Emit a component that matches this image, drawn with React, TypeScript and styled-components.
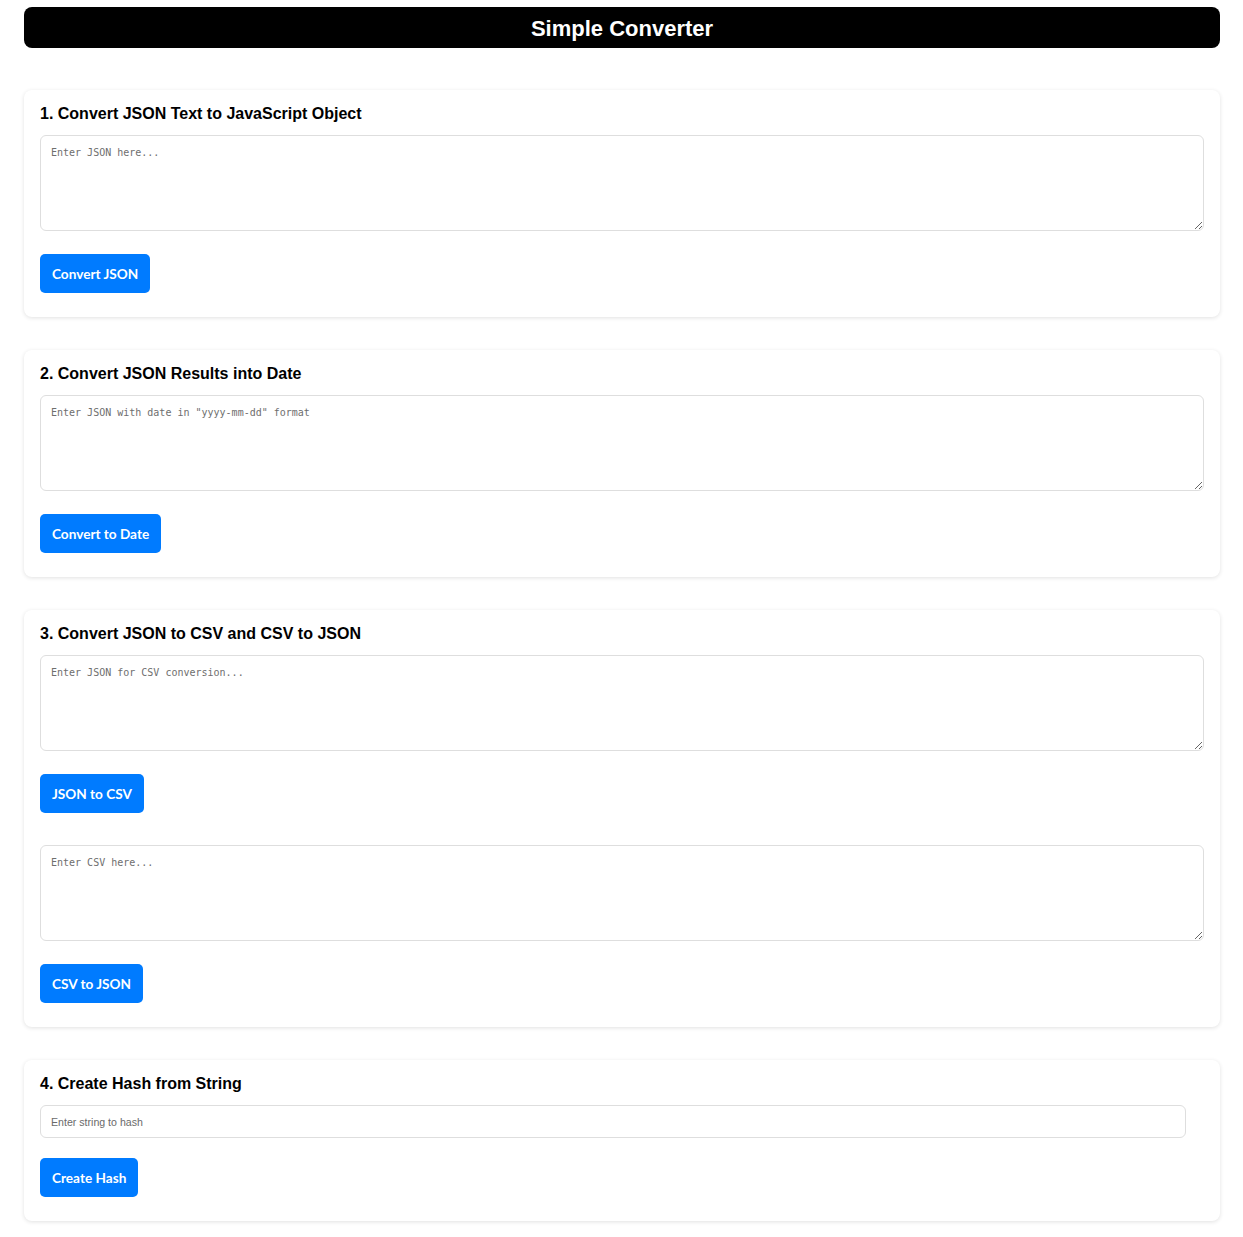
import React, { useState } from "react"
import styled, { createGlobalStyle } from "styled-components"

const GlobalStyle = createGlobalStyle`
  html, body {
    margin: 0;
    padding: 0;
    background: #ffffff;
    font-family: "Liberation Sans", Arial, sans-serif;
  }
  * {
    box-sizing: border-box;
  }
`

const sections = [
  {
    title: "1. Convert JSON Text to JavaScript Object",
    blocks: [{ placeholder: "Enter JSON here...", action: "Convert JSON" }],
  },
  {
    title: "2. Convert JSON Results into Date",
    blocks: [
      {
        placeholder: 'Enter JSON with date in "yyyy-mm-dd" format',
        action: "Convert to Date",
      },
    ],
  },
  {
    title: "3. Convert JSON to CSV and CSV to JSON",
    blocks: [
      { placeholder: "Enter JSON for CSV conversion...", action: "JSON to CSV" },
      { placeholder: "Enter CSV here...", action: "CSV to JSON" },
    ],
  },
]

const App = () => {
  const [hashInput, setHashInput] = useState("")

  return (
    <Page>
      <GlobalStyle />
      <Header>
        <Title>Simple Converter</Title>
      </Header>
      <SectionList>
        {sections.map(section => (
          <Card key={section.title}>
            <CardTitle>{section.title}</CardTitle>
            <BlockList>
              {section.blocks.map(block => (
                <Block key={block.action}>
                  <TextArea placeholder={block.placeholder} />
                  <Button type="button">{block.action}</Button>
                </Block>
              ))}
            </BlockList>
          </Card>
        ))}
        <Card>
          <CardTitle>4. Create Hash from String</CardTitle>
          <Block>
            <TextInput
              type="text"
              placeholder="Enter string to hash"
              value={hashInput}
              onChange={e => setHashInput(e.target.value)}
            />
            <Button type="button">Create Hash</Button>
          </Block>
        </Card>
      </SectionList>
    </Page>
  )
}

export default App

const Page = styled.div`
  padding: 7px 23px 10px 24px;
`

const Header = styled.header`
  height: 41px;
  padding-top: 2px;
  background-color: #000000;
  border-radius: 8px;
  display: flex;
  align-items: center;
  justify-content: center;
`

const Title = styled.h1`
  margin: 0;
  color: #ffffff;
  font-family: "Liberation Sans", Arial, sans-serif;
  font-size: 22px;
  font-weight: 700;
`

const SectionList = styled.main`
  display: flex;
  flex-direction: column;
  gap: 33px;
  margin-top: 42px;
`

const Card = styled.section`
  background-color: #ffffff;
  border-radius: 8px;
  padding: 15px 16px 24px;
  box-shadow: 0 1px 4px rgba(0, 0, 0, 0.12);
`

const CardTitle = styled.h2`
  margin: 0 0 12px;
  font-family: "Liberation Sans", Arial, sans-serif;
  font-size: 16px;
  font-weight: 700;
  line-height: 18px;
  color: #000000;
`

const BlockList = styled.div`
  display: flex;
  flex-direction: column;
  gap: 32px;
`

const Block = styled.div`
  display: flex;
  flex-direction: column;
  align-items: flex-start;
`

const TextArea = styled.textarea`
  display: block;
  width: 100%;
  height: 96px;
  margin: 0 0 23px;
  padding: 11px 10px 10px;
  border: 1px solid #dedede;
  border-radius: 6px;
  font-family: "DejaVu Sans Mono", "Liberation Mono", monospace;
  font-size: 10px;
  color: #333333;
  outline: none;

  &::placeholder {
    color: #6e6e6e;
  }
`

const TextInput = styled.input`
  display: block;
  width: 1146px;
  height: 33px;
  margin: 0 0 20px;
  padding: 0 10px;
  border: 1px solid #dedede;
  border-radius: 6px;
  font-family: "Liberation Sans", Arial, sans-serif;
  font-size: 10.6px;
  color: #333333;
  outline: none;

  &::placeholder {
    color: #6a6a6a;
  }
`

const Button = styled.button`
  height: 39px;
  padding: 0 12px;
  border: none;
  border-radius: 5px;
  background-color: #007bff;
  color: #ffffff;
  font-family: Lato, "Liberation Sans", sans-serif;
  font-size: 13.6px;
  font-weight: 700;
  cursor: pointer;
`
